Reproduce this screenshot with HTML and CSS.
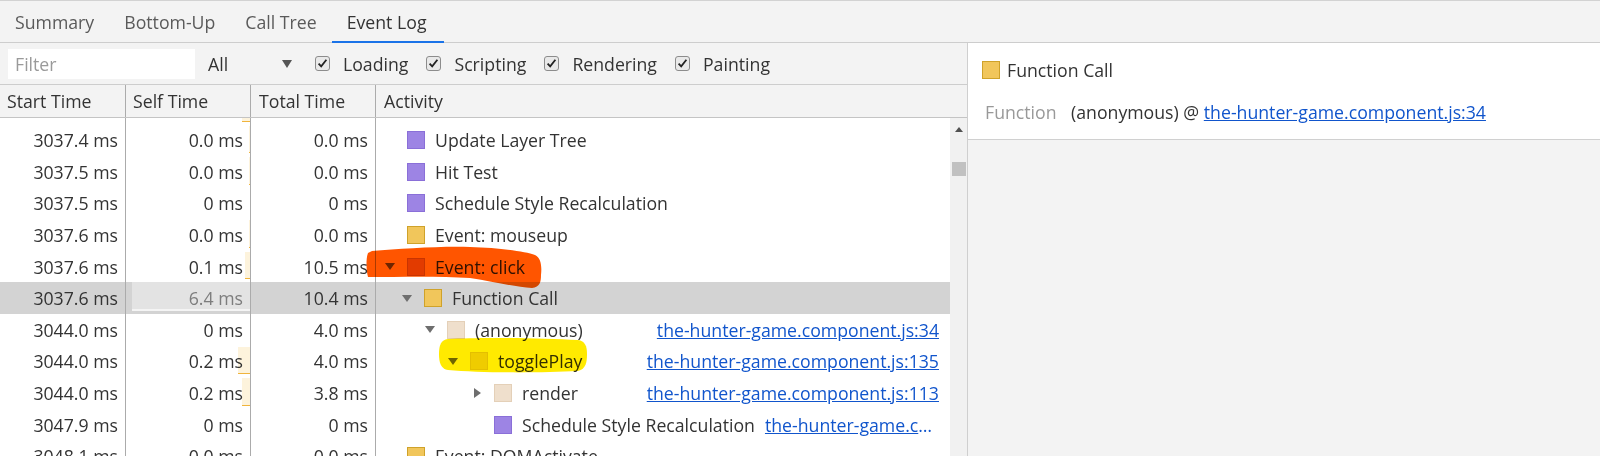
FILE: index.html
```html
<!DOCTYPE html>
<html>
<head>
<meta charset="utf-8">
<link rel="stylesheet" href="styles.css">
</head>
<body>
<div class="app">
  <div class="tabbar">
    <div class="tab">Summary</div>
    <div class="tab">Bottom-Up</div>
    <div class="tab">Call Tree</div>
    <div class="tab active">Event Log</div>
  </div>
  <div class="main">
    <div class="left">
      <div class="toolbar">
        <div class="filter">Filter</div>
        <div class="select"><span>All</span><span class="caret"></span></div>
        <div class="cb"><svg class="box" viewBox="0 0 15 15"><rect x="0.5" y="0.5" width="14" height="14" rx="2.5" fill="#e9e9e9" stroke="#8c8c8c"/><path d="M3.6 7.6 L6.2 10.4 L11.4 3.8" fill="none" stroke="#222" stroke-width="1.8"/></svg><span>Loading</span></div>
        <div class="cb"><svg class="box" viewBox="0 0 15 15"><rect x="0.5" y="0.5" width="14" height="14" rx="2.5" fill="#e9e9e9" stroke="#8c8c8c"/><path d="M3.6 7.6 L6.2 10.4 L11.4 3.8" fill="none" stroke="#222" stroke-width="1.8"/></svg><span>Scripting</span></div>
        <div class="cb"><svg class="box" viewBox="0 0 15 15"><rect x="0.5" y="0.5" width="14" height="14" rx="2.5" fill="#e9e9e9" stroke="#8c8c8c"/><path d="M3.6 7.6 L6.2 10.4 L11.4 3.8" fill="none" stroke="#222" stroke-width="1.8"/></svg><span>Rendering</span></div>
        <div class="cb"><svg class="box" viewBox="0 0 15 15"><rect x="0.5" y="0.5" width="14" height="14" rx="2.5" fill="#e9e9e9" stroke="#8c8c8c"/><path d="M3.6 7.6 L6.2 10.4 L11.4 3.8" fill="none" stroke="#222" stroke-width="1.8"/></svg><span>Painting</span></div>
      </div>
      <div class="ghead">
        <div class="hc c1">Start Time</div>
        <div class="hc c2">Self Time</div>
        <div class="hc c3">Total Time</div>
        <div class="hc c4">Activity</div>
      </div>
      <div class="gbody">
        <div class="rows">
          <div class="row partial">
            <div class="cell c1"></div>
            <div class="cell c2"><span class="bar" style="width:8px"></span></div>
            <div class="cell c3"></div>
            <div class="cell c4"></div>
          </div>
          <div class="row">
            <div class="cell c1"><span class="t">3037.4 ms</span></div>
            <div class="cell c2"><span class="bar" style="width:1px"></span><span class="t">0.0 ms</span></div>
            <div class="cell c3"><span class="t">0.0 ms</span></div>
            <div class="cell c4 l0"><span class="tri"></span><span class="sq purple"></span><span class="name">Update Layer Tree</span></div>
          </div>
          <div class="row">
            <div class="cell c1"><span class="t">3037.5 ms</span></div>
            <div class="cell c2"><span class="bar" style="width:1px"></span><span class="t">0.0 ms</span></div>
            <div class="cell c3"><span class="t">0.0 ms</span></div>
            <div class="cell c4 l0"><span class="tri"></span><span class="sq purple"></span><span class="name">Hit Test</span></div>
          </div>
          <div class="row">
            <div class="cell c1"><span class="t">3037.5 ms</span></div>
            <div class="cell c2"><span class="t">0 ms</span></div>
            <div class="cell c3"><span class="t">0 ms</span></div>
            <div class="cell c4 l0"><span class="tri"></span><span class="sq purple"></span><span class="name">Schedule Style Recalculation</span></div>
          </div>
          <div class="row">
            <div class="cell c1"><span class="t">3037.6 ms</span></div>
            <div class="cell c2"><span class="bar" style="width:1px"></span><span class="t">0.0 ms</span></div>
            <div class="cell c3"><span class="t">0.0 ms</span></div>
            <div class="cell c4 l0"><span class="tri"></span><span class="sq yellow"></span><span class="name">Event: mouseup</span></div>
          </div>
          <div class="row">
            <div class="cell c1"><span class="t">3037.6 ms</span></div>
            <div class="cell c2"><span class="bar" style="width:5px"></span><span class="t">0.1 ms</span></div>
            <div class="cell c3"><span class="t">10.5 ms</span></div>
            <div class="cell c4 l0"><span class="tri down"></span><span class="sq yellow dark"></span><span class="name">Event: click</span></div>
          </div>
          <div class="row selected">
            <div class="cell c1"><span class="t">3037.6 ms</span></div>
            <div class="cell c2"><span class="bar sel" style="width:118px"></span><span class="t dim">6.4 ms</span></div>
            <div class="cell c3"><span class="t">10.4 ms</span></div>
            <div class="cell c4 l1"><span class="tri down"></span><span class="sq yellow"></span><span class="name">Function Call</span></div>
          </div>
          <div class="row">
            <div class="cell c1"><span class="t">3044.0 ms</span></div>
            <div class="cell c2"><span class="t">0 ms</span></div>
            <div class="cell c3"><span class="t">4.0 ms</span></div>
            <div class="cell c4 l2"><span class="tri down"></span><span class="sq beige"></span><span class="name">(anonymous)</span><span class="link">the-hunter-game.component.js:34</span></div>
          </div>
          <div class="row">
            <div class="cell c1"><span class="t">3044.0 ms</span></div>
            <div class="cell c2"><span class="bar" style="width:12px"></span><span class="t">0.2 ms</span></div>
            <div class="cell c3"><span class="t">4.0 ms</span></div>
            <div class="cell c4 l3"><span class="tri down"></span><span class="sq beige"></span><span class="name">togglePlay</span><span class="link">the-hunter-game.component.js:135</span></div>
          </div>
          <div class="row">
            <div class="cell c1"><span class="t">3044.0 ms</span></div>
            <div class="cell c2"><span class="bar" style="width:8px"></span><span class="t">0.2 ms</span></div>
            <div class="cell c3"><span class="t">3.8 ms</span></div>
            <div class="cell c4 l4"><span class="tri collapsed"></span><span class="sq beige"></span><span class="name">render</span><span class="link">the-hunter-game.component.js:113</span></div>
          </div>
          <div class="row">
            <div class="cell c1"><span class="t">3047.9 ms</span></div>
            <div class="cell c2"><span class="t">0 ms</span></div>
            <div class="cell c3"><span class="t">0 ms</span></div>
            <div class="cell c4 l4"><span class="tri"></span><span class="sq purple"></span><span class="name">Schedule Style Recalculation</span><span class="link">the-hunter-game.component.js:34</span></div>
          </div>
          <div class="row">
            <div class="cell c1"><span class="t">3048.1 ms</span></div>
            <div class="cell c2"><span class="t">0.0 ms</span></div>
            <div class="cell c3"><span class="t">0.0 ms</span></div>
            <div class="cell c4 l0"><span class="tri"></span><span class="sq yellow"></span><span class="name">Event: DOMActivate</span></div>
          </div>
        </div>
        <div class="scrollbar"><span class="up"></span><span class="thumb"></span></div>
      </div>
    </div>
    <div class="detailpane">
      <div class="details">
        <div class="title"><span class="sq yellow"></span><span>Function Call</span></div>
        <div class="kv"><span class="k">Function</span><span class="v">(anonymous) @ <span class="link plain">the-hunter-game.component.js:34</span></span></div>
      </div>
    </div>
  </div>
  <svg class="marks" width="1600" height="456" viewBox="0 0 1600 456">
    <path fill="#ff5500" d="M372 251 C400 249 440 246 470 247 C500 248 525 251 535 255 C541 258 542 266 541 275 C541 282 540 287 532 288 C515 287 495 282 470 278 C440 276 400 277 368 277 C366 270 366 258 368 253 Z"/>
    <path fill="#ffea00" d="M448 339 C480 337 540 338 578 340 C585 341 587 346 587 354 C587 362 586 369 578 371 C540 373 480 373 448 370 C441 369 439 363 439 354 C439 345 441 340 448 339 Z"/>
  </svg>
</div>
</body>
</html>
```

FILE: styles.css
```css
* { box-sizing: border-box; }
html, body { margin: 0; padding: 0; }
body {
  width: 1600px;
  height: 456px;
  overflow: hidden;
  background: #f3f3f3;
  font-family: "Open Sans", "Noto Sans", sans-serif;
  font-size: 17.7px;
  color: #333;
}
.app {
  position: relative;
  width: 1600px;
  height: 456px;
  display: flex;
  flex-direction: column;
}

/* tabs */
.tabbar {
  height: 43px;
  flex: none;
  display: flex;
  background: #f3f3f3;
  border-top: 1px solid #d2d2d2;
  border-bottom: 1px solid #cdcdcd;
}
.tab {
  padding: 0 15px;
  margin-bottom: -1px;
  display: flex;
  align-items: center;
  color: #5a5a5a;
  white-space: nowrap;
}
.tab.active {
  color: #333;
  padding-right: 17px;
  box-shadow: inset 0 -2px 0 #1a73e8;
}

.main {
  flex: 1;
  display: flex;
  min-height: 0;
}
.left {
  width: 968px;
  flex: none;
  border-right: 1px solid #cfcfcf;
  display: flex;
  flex-direction: column;
}

/* toolbar */
.toolbar {
  height: 42px;
  flex: none;
  display: flex;
  align-items: center;
  padding-left: 8px;
  border-bottom: 1px solid #cdcdcd;
}
.filter {
  width: 187px;
  height: 30px;
  background: #fff;
  color: #9a9a9a;
  padding-left: 7px;
  display: flex;
  align-items: center;
}
.select {
  margin-left: 13px;
  width: 84px;
  display: flex;
  align-items: center;
  justify-content: space-between;
}
.caret {
  width: 0;
  height: 0;
  border-left: 5px solid transparent;
  border-right: 5px solid transparent;
  border-top: 8px solid #555;
}
.cb {
  display: flex;
  align-items: center;
  gap: 13px;
  margin-left: 18px;
}
.select + .cb { margin-left: 23px; }
.box { width: 15px; height: 15px; flex: none; }

/* grid header */
.ghead {
  height: 33px;
  flex: none;
  display: flex;
  border-bottom: 1px solid #c4c4c4;
}
.hc {
  display: flex;
  align-items: center;
  padding-left: 7px;
  border-right: 1px solid #ababab;
}
.c1 { width: 126px; flex: none; }
.c2 { width: 125px; flex: none; }
.c3 { width: 125px; flex: none; }
.c4 { flex: 1; min-width: 0; border-right: none; }
.hc.c3, .hc.c4 { padding-left: 8px; }

/* grid body */
.gbody {
  flex: 1;
  display: flex;
  min-height: 0;
}
.rows {
  width: 950px;
  flex: none;
  background: #fff;
  overflow: hidden;
}
.row {
  display: flex;
  height: 31.6px;
}
.row.partial { height: 6.5px; }
.row.selected { background: #d3d3d3; }
.cell {
  position: relative;
  display: flex;
  align-items: center;
  justify-content: flex-end;
  padding-right: 7px;
  white-space: nowrap;
  border-right: 1px solid #ababab;
}
.cell.c4 {
  border-right: none;
  justify-content: flex-start;
  padding-right: 11px;
}
.partial .cell { overflow: hidden; }
.t { position: relative; }
.t.dim { color: #7d7d7d; }
.bar {
  position: absolute;
  right: 0;
  top: 1px;
  bottom: 3px;
  background: #fdf3dc;
  border-bottom: 1.5px solid #f0b43c;
}
.partial .bar { top: -20px; bottom: 3px; }
.bar.sel {
  background: #e3e3e3;
  border-bottom: 2px solid #f4f4f4;
  top: 0;
}

.l0 { padding-left: 9px; }
.l1 { padding-left: 26px; }
.l2 { padding-left: 49px; }
.l3 { padding-left: 72px; }
.l4 { padding-left: 96px; }
.tri {
  width: 10px;
  height: 10px;
  margin-right: 12px;
  flex: none;
  display: flex;
  align-items: center;
  justify-content: center;
}
.tri.down::before {
  content: "";
  width: 0;
  height: 0;
  border-left: 5px solid transparent;
  border-right: 5px solid transparent;
  border-top: 7px solid #6e6e6e;
}
.tri.collapsed::before {
  content: "";
  width: 0;
  height: 0;
  border-top: 5px solid transparent;
  border-bottom: 5px solid transparent;
  border-left: 7px solid #6e6e6e;
}
.sq {
  width: 18px;
  height: 18px;
  flex: none;
  margin-right: 10px;
  border: 1px solid;
}
.sq.purple { background: #9d84e4; border-color: #8a6fd8; }
.sq.yellow { background: #f1c65b; border-color: #cfa22a; }
.sq.yellow.dark { background: #e2b048; border-color: #c99a2a; }
.sq.beige { background: #efdfcc; border-color: #e4d0b8; }
.name { flex: none; }
.link {
  margin-left: auto;
  padding-left: 10px;
  min-width: 0;
  overflow: hidden;
  text-overflow: ellipsis;
  white-space: nowrap;
  color: #1155cc;
  text-decoration: underline;
}

/* scrollbar */
.scrollbar {
  width: 17px;
  flex: none;
  background: #f1f1f1;
  display: flex;
  flex-direction: column;
  align-items: center;
}
.up {
  margin-top: 9px;
  width: 0;
  height: 0;
  border-left: 4px solid transparent;
  border-right: 4px solid transparent;
  border-bottom: 5px solid #505050;
}
.thumb {
  margin-top: 30px;
  margin-left: 1px;
  width: 14px;
  height: 14px;
  background: #c1c1c1;
}

/* right details pane */
.detailpane {
  flex: 1;
  background: #f3f3f3;
}
.details {
  height: 97px;
  background: #fff;
  border-bottom: 1px solid #d0d0d0;
  padding: 10px 14px;
}
.title {
  height: 34px;
  display: flex;
  align-items: center;
}
.title .sq { margin-right: 7px; }
.kv {
  margin-top: 8px;
  height: 34px;
  display: flex;
  align-items: center;
  padding-left: 3px;
  white-space: nowrap;
}
.k { width: 86px; color: #999; flex: none; }
.link.plain { margin-left: 0; padding-left: 0; }

/* annotation marks drawn over the screenshot */
.marks {
  position: absolute;
  left: 0;
  top: 0;
  pointer-events: none;
  mix-blend-mode: multiply;
}
```
